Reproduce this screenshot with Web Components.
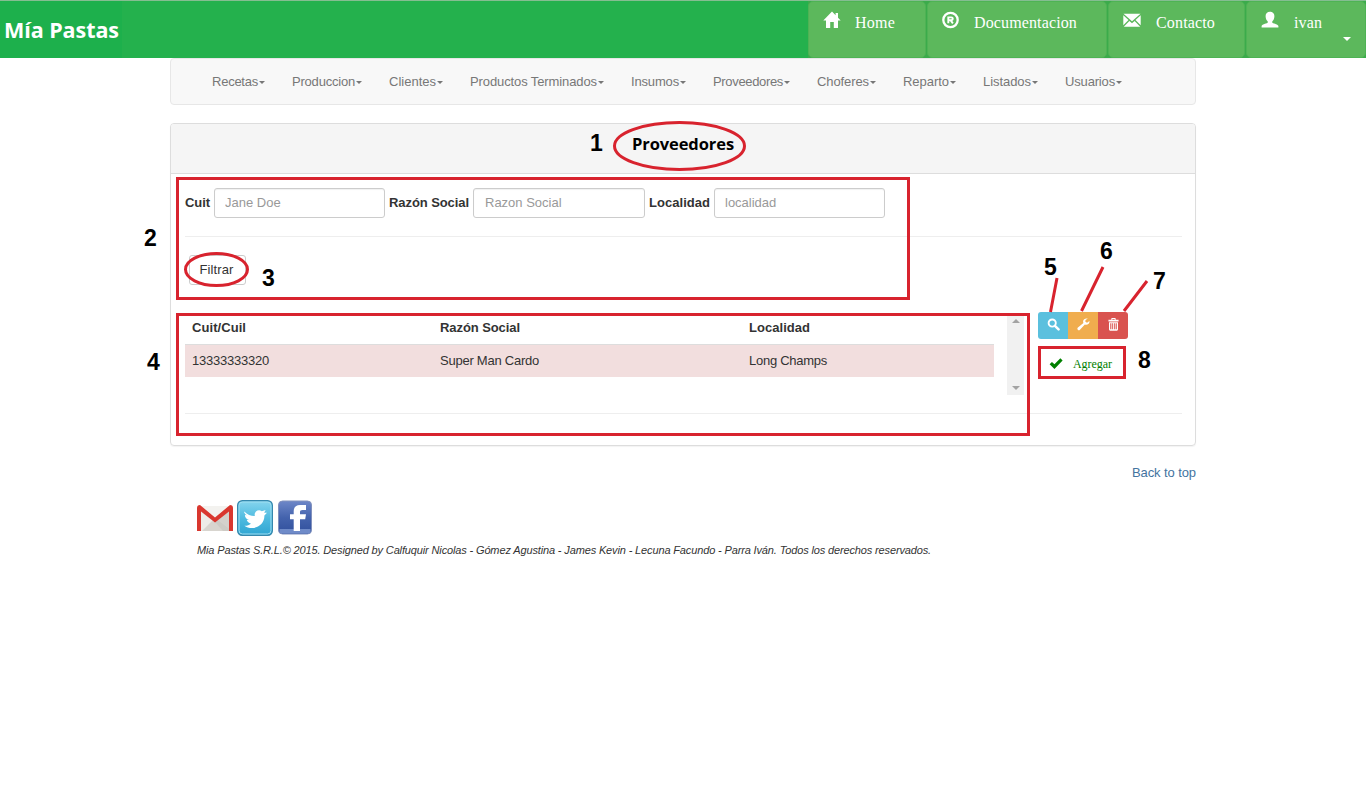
<!DOCTYPE html>
<html lang="es">
<head>
<meta charset="utf-8">
<title>Mía Pastas</title>
<style>
body{margin:0;background:#fff;font:13px/18px "Liberation Sans",Arial,sans-serif;color:#333;width:1366px;height:790px;overflow:hidden;position:relative}
</style>
</head>
<body>
<mp-topbar></mp-topbar>
<mp-nav></mp-nav>
<mp-panel heading="Proveedores">
  <mp-filter></mp-filter>
  <mp-results></mp-results>
</mp-panel>
<mp-footer></mp-footer>
<mp-annotations></mp-annotations>
<script>
class Base extends HTMLElement{
  connectedCallback(){
    if(this.shadowRoot)return;
    this.attachShadow({mode:'open'}).innerHTML=`<style>*{box-sizing:border-box}${this.css()}</style>${this.html()}`;
  }
  css(){return ':host{display:block}'}
  html(){return '<slot></slot>'}
}

// Single-line text whose tracking adjusts to the width in the "w" attribute.
class MpText extends Base{
  css(){return ':host{display:inline-block;white-space:nowrap}'}
  connectedCallback(){
    super.connectedCallback();
    const w=+this.getAttribute('w'),n=this.textContent.length;
    if(w)this.style.letterSpacing=(w-this.getBoundingClientRect().width)/n+'px';
  }
}
customElements.define('mp-text',MpText);

const ICONS={
  home:'<path d="M9 0.5 0.3 9.6H3V17H7.2V11H10.8V17H15V9.6H17.7L15 6.7V2H12.6V4.3Z"/>',
  reg:'<g fill="none" stroke="currentColor"><circle cx="8.500" cy="9" r="7.2" stroke-width="2.3"/><path d="M6.3 12.3V6.4H9.3Q10.8 6.4 10.8 7.8 10.8 9.2 9.3 9.2H6.3M8.500 9.2 10.9 12.3" stroke-width="1.9"/></g>',
  mail:'<path d="M.5 2.8H17.5L9 10.3ZM.3 4.3 5.5 9.1.3 14.3ZM17.7 4.3 12.5 9.1 17.7 14.3ZM6.4 9.9 9 12.2 11.6 9.9 17.2 15.7H.8Z"/>',
  user:'<path d="M9 .8C6.2.8 4.500 2.7 4.600 5.2 4.7 7.8 5.600 9.4 6.7 10.3V11.8C4.5 13 1 13.3.6 15V16.6H17.4V15C17 13.3 13.5 13 11.3 11.8V10.3C12.4 9.4 13.3 7.8 13.4 5.2 13.5 2.7 11.8.8 9 .8Z"/>',
  search:'<g fill="none" stroke="currentColor"><circle cx="7.2" cy="7" r="5" stroke-width="2.6"/><path d="M11 10.8 16 15.8" stroke-width="3.4" stroke-linecap="round"/></g>',
  wrench:'<path d="M17.2 4.3 13.9 6.6 11.6 5.3 11.8 2.6 15 .8C12.2-.1 8.6 1.3 8.4 4.5 8.4 5.4 8.6 6.1 8.9 6.8L1.3 13.3C-.9 15.2 2.1 18.4 4.1 16.3L10.9 9C14 10.1 17.8 8 17.2 4.3Z"/>',
  trash:'<path fill-rule="evenodd" d="M6 2.3V.7Q6 0 6.8 0H11.2Q12 0 12 .7V2.3H16V4.8H2V2.3ZM7.4 1.3V2.3H10.6V1.3ZM2.8 5.8H15.2V16Q15.2 17.5 13.7 17.5H4.3Q2.8 17.5 2.8 16ZM4.5 7.2V15.7H6V7.2ZM7.2 7.2V15.7H8.4V7.2ZM9.6 7.2V15.7H10.8V7.2ZM12 7.2V15.7H13.5V7.2Z"/>',
  check:'<path d="M.8 9.3 3.8 6.4 7 9.4 14.6 1.7 17.5 4.5 7 15.3Z"/>'
};
class MpIcon extends Base{
  css(){const s=this.getAttribute('size')||18;return `:host{display:block;flex:none;width:${s}px;height:${s}px}svg{display:block;width:100%;height:100%}`}
  html(){return `<svg viewBox="0 0 18 18" fill="currentColor">${ICONS[this.getAttribute('name')]}</svg>`}
}
customElements.define('mp-icon',MpIcon);

class MpTopbar extends Base{
  css(){return `
    :host{display:flex;box-sizing:border-box;height:58px;background:#24b14d;border-top:1px solid #85bd91;color:#fff}
    .brand{flex:1;background:linear-gradient(90deg,#1db04c 0 122px,#24b14d 122px);padding:15px 0 0 4px;font:bold 21.5px/28px "Open Sans","Noto Sans",sans-serif}
    .btns{display:flex;gap:1px;background:#3bab4b}
    .b{height:57px;background:#5cb85c;border:1px solid #4eb354;border-radius:5px;display:flex;align-items:flex-start;padding:9px 0 0 14px;gap:14px;font:16px/23px "Liberation Serif",serif}
    .b.l{gap:15px}
    .caret{align-self:flex-start;margin:26px 0 0 6px;border:4px solid transparent;border-top-color:#fff;border-bottom:0}`}
  html(){return `<div class="brand"><mp-text w="115">Mía Pastas</mp-text></div><div class="btns">
    <div class="b" style="width:118px"><mp-icon name="home"></mp-icon><mp-text w="40">Home</mp-text></div>
    <div class="b" style="width:180px"><mp-icon name="reg"></mp-icon><mp-text w="103">Documentacion</mp-text></div>
    <div class="b l" style="width:137px"><mp-icon name="mail"></mp-icon><mp-text w="59">Contacto</mp-text></div>
    <div class="b l" style="width:120px"><mp-icon name="user"></mp-icon><mp-text w="28">ivan</mp-text><i class="caret"></i></div></div>`}
}
customElements.define('mp-topbar',MpTopbar);

class MpNav extends Base{
  css(){return `
    :host{display:grid;grid-template-columns:80px 97px 81px 161px 82px 104px 86px 80px 82px 1fr;margin:0 170px;height:47px;background:#f8f8f8;border:1px solid #e7e7e7;border-radius:4px;padding-left:41px;color:#777;box-sizing:border-box}
    .i{display:flex;align-items:center;height:45px}
    i{margin-left:1px;border:3.5px solid transparent;border-top:3.5px solid #777;border-bottom:0;margin-top:2px}`}
  html(){return [['Recetas',46],['Produccion',63],['Clientes',47],['Productos Terminados',127],['Insumos',48],['Proveedores',70],['Choferes',52],['Reparto',46],['Listados',48],['Usuarios',50]]
    .map(([t,w])=>`<div class="i"><mp-text w="${w}">${t}</mp-text><i></i></div>`).join('')}
}
customElements.define('mp-nav',MpNav);

class MpPanel extends Base{
  css(){return `
    :host{display:block;box-sizing:border-box;margin:18px 170px 0;height:323px;border:1px solid #ddd;border-radius:4px;box-shadow:0 1px 1px rgba(0,0,0,.05)}
    header{height:50px;background:#f5f5f5;border-bottom:1px solid #ddd;border-radius:3px 3px 0 0;padding:9px 0 0 461px;font:bold 16.5px/22px "Open Sans","Noto Sans",sans-serif;color:#000}
    .body{padding:14px 13px 0 14px}`}
  html(){return `<header><mp-text w="102">${this.getAttribute('heading')}</mp-text></header><div class="body"><slot></slot></div>`}
}
customElements.define('mp-panel',MpPanel);

class MpField extends Base{
  css(){return `
    :host{display:flex;align-items:center;gap:4px;font-weight:bold}
    input{width:${this.getAttribute('iw')||171}px;height:30px;border:1px solid #ccc;border-radius:3px;padding:0 10px 2px ${this.getAttribute('iw')?11:10}px;font:13px "Liberation Sans",sans-serif;background:#fff;box-shadow:inset 0 1px 1px rgba(0,0,0,.06)}
    input::placeholder{color:#999;opacity:1}`}
  html(){return `<mp-text w="${this.getAttribute('lw')}">${this.getAttribute('label')}</mp-text><input placeholder="${this.getAttribute('hint')}">`}
}
customElements.define('mp-field',MpField);

class MpFilter extends Base{
  css(){return `
    :host{display:block}
    .row{display:flex;gap:4px}
    hr{border:0;border-top:1px solid #eee;margin:18px 0}
    button{display:block;margin-left:4px;width:57px;height:30px;border:1px solid #ccc;border-radius:3px;background:#fff;padding:0 2px 2px 0;font:13px "Liberation Sans",sans-serif;color:#333}`}
  html(){return `<div class="row"><mp-field label="Cuit" lw="25" hint="Jane Doe"></mp-field><mp-field label="Razón Social" lw="80" hint="Razon Social" iw="172"></mp-field><mp-field label="Localidad" lw="61" hint="localidad"></mp-field></div><hr><button><mp-text w="34">Filtrar</mp-text></button>`}
}
customElements.define('mp-filter',MpFilter);

class MpResults extends Base{
  css(){return `
    :host{display:block;margin-top:27px}
    .top{display:flex;height:102px;border-bottom:1px solid #eee}
    .table{width:809px}
    .r{display:grid;grid-template-columns:248px 309px 1fr;padding-left:7px;align-items:center}
    .h{height:33px;font-weight:bold;border-bottom:1px solid #ddd;padding-bottom:1px}
    .d{height:32px;background:#f2dede}
    .sb{margin:2px 0 0 13px;width:17px;height:81px;background:#f1f1f1;display:flex;flex-direction:column;justify-content:space-between;align-items:center;padding:5px 0}
    .sb i{border:4px solid transparent;border-bottom-color:#a3a3a3;border-top:0}
    .sb i+i{border:4px solid transparent;border-top-color:#a3a3a3;border-bottom:0}
    .act{margin-left:14px}
    .g{display:flex;width:90px;height:27px;border-radius:3px;overflow:hidden;color:#fff}
    .g div{width:30px;display:flex;justify-content:center;padding-top:6px}
    .add{display:flex;align-items:center;gap:10px;padding-left:11px;margin-top:13px;height:24px;color:green;font:12px/16px "Liberation Serif",serif}`}
  html(){return `<div class="top"><div class="table">
      <div class="r h"><span><mp-text w="54">Cuit/Cuil</mp-text></span><span><mp-text w="80">Razón Social</mp-text></span><span><mp-text w="61">Localidad</mp-text></span></div>
      <div class="r d"><span><mp-text w="77">13333333320</mp-text></span><span><mp-text w="99">Super Man Cardo</mp-text></span><span><mp-text w="78">Long Champs</mp-text></span></div>
    </div><div class="sb"><i></i><i></i></div>
    <div class="act"><div class="g"><div style="background:#5bc0de"><mp-icon name="search" size="13"></mp-icon></div><div style="background:#f0ad4e"><mp-icon name="wrench" size="13"></mp-icon></div><div style="background:#d9534f"><mp-icon name="trash" size="13"></mp-icon></div></div>
    <div class="add"><mp-icon name="check" size="14"></mp-icon><mp-text w="39">Agregar</mp-text></div></div></div>`}
}
customElements.define('mp-results',MpResults);

class MpFooter extends Base{
  css(){return `
    :host{display:block;margin:18px 170px 0}
    .back{text-align:right;color:#44749f}
    .soc{display:flex;gap:4px;margin:18px 0 0 27px;height:37px}
    svg{display:block}
    .c{margin:4px 0 0 27px;font:italic 11px/18px "Liberation Sans",sans-serif}`}
  html(){return `<div class="back"><mp-text w="64">Back to top</mp-text></div>
  <div class="soc">
  <svg width="36" height="36" viewBox="0 0 36 36"><rect x="1" y="6" width="34" height="25" rx="1.5" fill="#eeece8"/><path d="M5 31 18 18 35 31Z" fill="#d8d5cf"/><path d="M18 22 35 8V31H26Z" fill="#c9c6c0" opacity=".7"/><path d="M4 6H32L18 18Z" fill="#f3f2ef"/><path d="M0 8Q0 5 3 5L18 17.500 33 5Q36 5 36 8V31H32V11.500L18 22.500 4 11.500V31H0Z" fill="#d9372f"/></svg>
  <svg width="37" height="37" viewBox="0 0 37 37"><defs><linearGradient id="t" x2="0" y2="1"><stop stop-color="#87d5ee"/><stop offset=".5" stop-color="#4fbbe0"/><stop offset="1" stop-color="#2fa5d2"/></linearGradient></defs><rect x=".7" y=".7" width="34.6" height="34.6" rx="4.5" fill="url(#t)" stroke="#3588ad" stroke-width="1.4"/><rect x="2" y="2" width="32" height="32" rx="3.5" fill="none" stroke="#9edff2"/><path d="M7.3 11.5C10.3 14.5 14 16.2 17.8 16.1 16.8 11.8 21.2 8.7 24.8 11.2L28.6 10.1 27.2 12.7 30 12.7 27.4 15.4C27.6 23 21.7 28 15 28 12 28 9.4 27.1 7.4 25.7 10 25.8 12.2 25.1 14 23.7 11.7 23.2 10.4 21.9 9.8 20.1L12 20C9.3 19 8 17.2 7.9 14.9L9.8 15.3C7.7 13.9 6.9 12.6 7.3 11.5Z" fill="#fff"/></svg>
  <svg width="34" height="36" viewBox="0 0 34 36"><defs><linearGradient id="f" x2="0" y2="1"><stop stop-color="#6e87c8"/><stop offset=".5" stop-color="#4463ad"/><stop offset="1" stop-color="#304f9c"/></linearGradient></defs><rect x=".5" y="1" width="33" height="33" rx="4" fill="url(#f)" stroke="#8291bd"/><path d="M1.5 29H32.5V31Q32.5 33.5 30 33.5H4Q1.5 33.5 1.5 31Z" fill="#6f8bc9"/><path d="M15.7 31V19.300H12V14.300H15.700V11.200C15.700 7 18.200 5 22.2 5H28V10H24.600C22.600 10 22 10.800 22 12.200V14.300H28L27.200 19.300H22V31Z" fill="#fff"/></svg>
  </div>
  <div class="c"><mp-text w="734">Mia Pastas S.R.L.© 2015. Designed by Calfuquir Nicolas - Gómez Agustina - James Kevin - Lecuna Facundo - Parra Iván. Todos los derechos reservados.</mp-text></div>`}
}
customElements.define('mp-footer',MpFooter);

// Numbered callouts drawn over the page.
class MpAnnotations extends Base{
  css(){return `:host{position:absolute;left:0;top:0;width:1366px;height:790px;pointer-events:none}
    svg{display:block}
    text{font:bold 23px "Liberation Sans",sans-serif;fill:#000;stroke:none}`}
  html(){
    const n=[[590,151],[144,246],[262,286],[147,370],[1044,275],[1100,259],[1153,289],[1138,368]];
    return `<svg width="1366" height="790" fill="none" stroke="#d8232e" stroke-width="3">
    <ellipse cx="679.5" cy="146" rx="65" ry="23.5"/><ellipse cx="216.5" cy="269.5" rx="31" ry="16"/>
    <rect x="177.5" y="178.500" width="731" height="120"/><rect x="177.500" y="314.500" width="851" height="120"/><rect x="1039.500" y="347.500" width="85" height="30"/>
    <path d="M1057 278 1050.500 312M1103 267 1081.500 311M1147 281 1124 311"/>
    ${n.map((p,i)=>`<text x="${p[0]}" y="${p[1]}">${i+1}</text>`).join('')}</svg>`}
}
customElements.define('mp-annotations',MpAnnotations);
</script>
</body>
</html>
